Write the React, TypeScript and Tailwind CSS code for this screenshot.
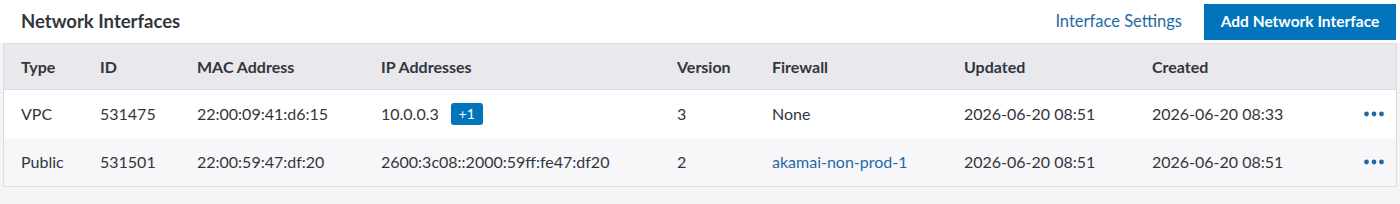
import React from "react";

const rows = [
  { type: "VPC", id: "531475", mac: "22:00:09:41:d6:15", ip: "10.0.0.3", extra: "+1", version: "3", firewall: "None", link: false, updated: "2026-06-20 08:51", created: "2026-06-20 08:33", bg: "bg-white" },
  { type: "Public", id: "531501", mac: "22:00:59:47:df:20", ip: "2600:3c08::2000:59ff:fe47:df20", extra: "", version: "2", firewall: "akamai-non-prod-1", link: true, updated: "2026-06-20 08:51", created: "2026-06-20 08:51", bg: "bg-[#f7f7fa]" },
];

const grid = "grid grid-cols-[79px_97px_184px_296px_95px_192px_188px_1fr_auto] items-center pl-[17px] pr-[12px]";

function Dots() {
  return (
    <svg width="20" height="6" viewBox="0 0 20 6" className="block">
      <circle cx="2.5" cy="3" r="2.4" fill="#1f6aa5" />
      <circle cx="10" cy="3" r="2.4" fill="#1f6aa5" />
      <circle cx="17.5" cy="3" r="2.4" fill="#1f6aa5" />
    </svg>
  );
}

export default function App() {
  return (
    <div className="w-[1400px] h-[204px] bg-[#f4f4f6] text-[#32363c]" style={{ fontFamily: "Lato, 'Noto Sans', sans-serif" }}>
      <div className="h-[43px] bg-white flex items-center justify-between pl-[21px] pr-[4px]">
        <h2 className="text-[18.5px] font-bold text-[#32363c]">Network Interfaces</h2>
        <div className="flex items-center h-full">
          <span className="text-[16.5px] text-[#1f6aa5] mr-[22px]">Interface Settings</span>
          <button className="h-[36px] w-[192px] bg-[#0174bc] text-white text-[15.5px] font-bold">Add Network Interface</button>
        </div>
      </div>
      <div className="mx-[3px] border border-[#dcdce1] text-[16px]">
        <div className={`${grid} h-[46px] bg-[#e8e8ed] font-bold border-b border-[#dcdce1]`}>
          <div>Type</div>
          <div>ID</div>
          <div>MAC Address</div>
          <div>IP Addresses</div>
          <div>Version</div>
          <div>Firewall</div>
          <div>Updated</div>
          <div>Created</div>
          <div className="w-[20px]" />
        </div>
        {rows.map((r, i) => (
          <div key={i} className={`${grid} h-[48px] ${r.bg} ${i === 0 ? "border-b border-white" : ""}`}>
            <div>{r.type}</div>
            <div>{r.id}</div>
            <div>{r.mac}</div>
            <div className="flex items-center">
              <span>{r.ip}</span>
              {r.extra && (
                <span className="ml-[12px] bg-[#0174bc] text-white text-[14px] rounded-[3px] h-[22px] w-[32px] flex items-center justify-center">{r.extra}</span>
              )}
            </div>
            <div>{r.version}</div>
            <div className={r.link ? "text-[#1f6aa5]" : ""}>{r.firewall}</div>
            <div>{r.updated}</div>
            <div>{r.created}</div>
            <div className="w-[20px]"><Dots /></div>
          </div>
        ))}
      </div>
    </div>
  );
}
